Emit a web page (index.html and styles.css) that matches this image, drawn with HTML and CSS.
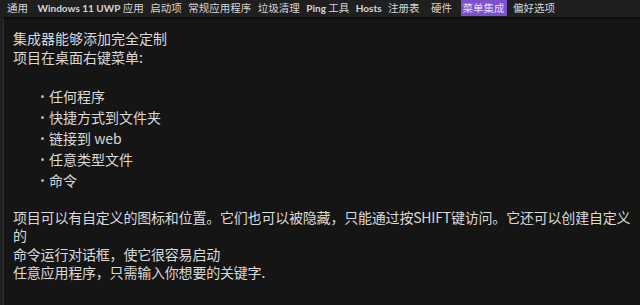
FILE: index.html
```html
<!DOCTYPE html>
<html lang="zh-CN">
<head>
    <meta charset="UTF-8">
    <title>菜单集成</title>
    <link rel="stylesheet" href="styles.css">
</head>
<body>
    <nav class="tabs">
        <span class="tab">通用</span>
        <span class="tab wide"><b>Windows 11 UWP</b> 应用</span>
        <span class="tab">启动项</span>
        <span class="tab">常规应用程序</span>
        <span class="tab">垃圾清理</span>
        <span class="tab"><b>Ping</b> 工具</span>
        <span class="tab"><b>Hosts</b></span>
        <span class="tab">注册表</span>
        <span class="tab spaced">硬件</span>
        <span class="tab active">菜单集成</span>
        <span class="tab">偏好选项</span>
    </nav>

    <main class="panel">
        <p class="intro">集成器能够添加完全定制<br>项目在桌面右键菜单:</p>
        <ul class="items">
            <li>任何程序</li>
            <li>快捷方式到文件夹</li>
            <li>链接到 web</li>
            <li>任意类型文件</li>
            <li>命令</li>
        </ul>
        <p class="details">项目可以有自定义的图标和位置。它们也可以被隐藏，只能通过按SHIFT键访问。它还可以创建自定义的<br>命令运行对话框，使它很容易启动<br>任意应用程序，只需输入你想要的关键字.</p>
    </main>
</body>
</html>
```

FILE: styles.css
```css
:root {
    --bar-bg: #1f1f1f;
    --panel-bg: #151515;
    --panel-border: #2f2f2f;
    --text-color: #d9d9d9;
    --tab-text: #d6d6d6;
    --accent: #7b52cc;
}

html, body {
    height: 100%;
}

body {
    margin: 0;
    background-color: var(--bar-bg);
    color: var(--text-color);
    font-family: "Noto Sans CJK SC", "Open Sans", sans-serif;
    display: flex;
    flex-direction: column;
    overflow: hidden;
}

.tabs {
    display: flex;
    align-items: center;
    height: 16px;
    padding: 0 0 0 7px;
    gap: 6.5px;
    font-size: 10.5px;
    white-space: nowrap;
}

.tab {
    color: var(--tab-text);
    line-height: 16px;
}

.tab b {
    font-family: "Lato", "Noto Sans CJK SC", sans-serif;
    font-weight: 700;
    font-size: 10px;
}

.tab.wide {
    margin-left: 3px;
}

.tab.spaced {
    margin-left: 5px;
}

.tab.active {
    background-color: var(--accent);
    color: #e8dcff;
    padding: 0 2px;
    margin-left: 2px;
}

.panel {
    flex: 1;
    margin: 1px 0 0 3px;
    border-top: 2px solid #0e0e0e;
    border-left: 1px solid var(--panel-border);
    background-color: var(--panel-bg);
    padding: 10px 8px 0 9px;
    font-size: 14px;
}

.intro {
    margin: 0;
    line-height: 19px;
}

.items {
    list-style: none;
    margin: 19px 0 0;
    padding: 0 0 0 28px;
}

.items li {
    line-height: 21px;
    display: flex;
    align-items: center;
}

.items li::before {
    content: "";
    width: 3px;
    height: 3px;
    background-color: #b5b5b5;
    border-radius: 50%;
    margin-right: 5px;
}

.details {
    margin: 16.5px 0 0;
    line-height: 18.5px;
    font-size: 14px;
    letter-spacing: -0.2px;
}
```
